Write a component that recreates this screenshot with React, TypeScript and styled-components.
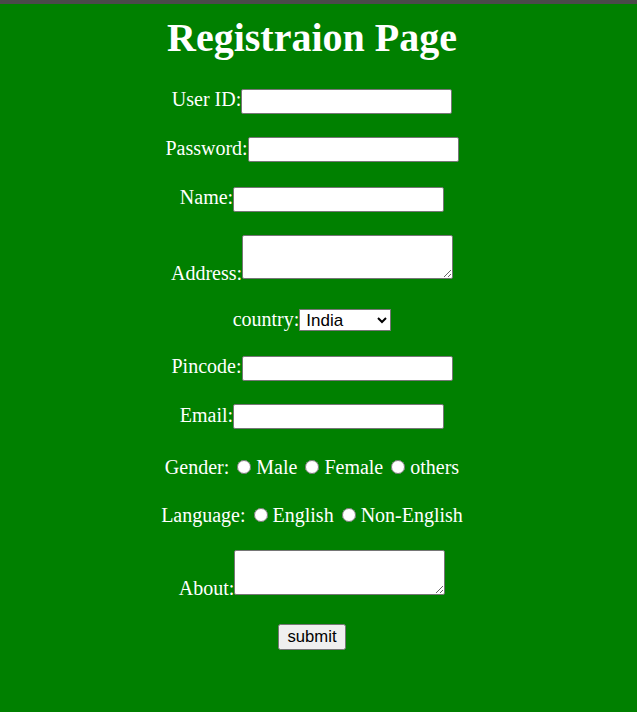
import React from 'react';
import styled, { createGlobalStyle } from 'styled-components';

const GlobalStyle = createGlobalStyle`
  html, body {
    margin: 0;
    padding: 0;
    background: #008000;
  }
  body {
    font-family: "Liberation Serif", "Times New Roman", serif;
    font-size: 20px;
    color: #ffffff;
  }
`;

const TopBar = styled.div`
  height: 4px;
  background: #4a4a4a;
`;

const Page = styled.div`
  padding: 10px 23px 40px 10px;
  text-align: center;
`;

const Title = styled.h1`
  margin: 0 0 27px;
  font-size: 40px;
  font-weight: bold;
`;

const Row = styled.div<{ $gap?: number }>`
  margin-bottom: ${(p) => p.$gap ?? 23}px;
`;

const TextInput = styled.input`
  box-sizing: border-box;
  width: 211px;
  height: 25px;
  margin: 0;
  padding: 1px 2px;
  border: 1px solid #767676;
  border-radius: 2px;
  background: #ffffff;
  font-family: "Liberation Sans", Arial, sans-serif;
  font-size: 16.67px;
`;

const TextArea = styled.textarea`
  box-sizing: border-box;
  width: 211px;
  height: 44.5px;
  margin: 0;
  padding: 2px;
  border: 1px solid #767676;
  border-radius: 2px;
  background: #ffffff;
  font-family: "Liberation Mono", monospace;
  font-size: 16.67px;
  vertical-align: baseline;
`;

const Select = styled.select`
  box-sizing: border-box;
  width: 92px;
  height: 22px;
  margin: 0;
  padding: 0 2px;
  border: 1px solid #767676;
  border-radius: 0;
  background: #ffffff;
  color: #000000;
  font-family: "Liberation Sans", Arial, sans-serif;
  font-size: 17px;
`;

const Radio = styled.input`
  width: 14px;
  height: 14px;
  margin: 3px 5px 0 3px;
`;

const SubmitButton = styled.button`
  box-sizing: border-box;
  height: 26px;
  padding: 1px 8.5px;
  border: 1px solid #767676;
  border-radius: 2.5px;
  background: #efefef;
  color: #000000;
  font-family: "Liberation Sans", Arial, sans-serif;
  font-size: 16.67px;
`;

export default function App() {
  return (
    <>
      <GlobalStyle />
      <TopBar />
      <Page>
        <Title>Registraion Page</Title>
        <form onSubmit={(e) => e.preventDefault()}>
          <Row>
            User ID:<TextInput type="text" />
          </Row>
          <Row $gap={24}>
            Password:<TextInput type="password" />
          </Row>
          <Row>
            Name:<TextInput type="text" />
          </Row>
          <Row $gap={24}>
            Address:<TextArea />
          </Row>
          <Row $gap={24}>
            country:<Select defaultValue="India">
              <option>India</option>
              <option>USA</option>
              <option>UK</option>
            </Select>
          </Row>
          <Row>
            Pincode:<TextInput type="text" />
          </Row>
          <Row $gap={27}>
            Email:<TextInput type="email" />
          </Row>
          <Row $gap={25}>
            Gender: <Radio type="radio" name="gender" />Male{' '}
            <Radio type="radio" name="gender" />Female{' '}
            <Radio type="radio" name="gender" />others
          </Row>
          <Row>
            Language: <Radio type="radio" name="lang" />English{' '}
            <Radio type="radio" name="lang" />Non-English
          </Row>
          <Row $gap={24}>
            About:<TextArea />
          </Row>
          <Row>
            <SubmitButton type="submit">submit</SubmitButton>
          </Row>
        </form>
      </Page>
    </>
  );
}
